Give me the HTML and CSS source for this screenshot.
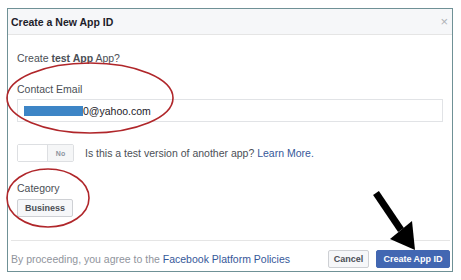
FILE: index.html
```html
<!DOCTYPE html>
<html>
<head>
<meta charset="utf-8">
<link rel="stylesheet" href="styles.css">
</head>
<body>
<div class="dialog">
  <div class="header">
    <span class="title">Create a New App ID</span>
    <span class="close">&#215;</span>
  </div>
  <div class="content">
    <div class="intro">Create <b>test App</b> App?</div>
    <div class="label">Contact Email</div>
    <div class="input"><span class="redact"></span>0@yahoo.com</div>
    <div class="toggle-row">
      <div class="toggle"><span class="knob"></span><span class="no">No</span></div>
      <span class="question">Is this a test version of another app? <a class="link">Learn More.</a></span>
    </div>
    <div class="label cat">Category</div>
    <div class="btn-cat">Business</div>
  </div>
  <div class="footer">
    <span class="agree">By proceeding, you agree to the <a class="link">Facebook Platform Policies</a></span>
    <div class="actions">
      <button class="btn cancel">Cancel</button>
      <button class="btn primary">Create App ID</button>
    </div>
  </div>
</div>
<svg class="marks" width="461" height="280" viewBox="0 0 461 280">
  <ellipse cx="90" cy="98" rx="83" ry="35" fill="none" stroke="#b0262a" stroke-width="1.6"/>
  <ellipse cx="48" cy="198" rx="41" ry="29" fill="none" stroke="#b0262a" stroke-width="1.6"/>
  <polygon points="378.9,191 373.1,195 398.1,232 403.9,228" fill="#000"/>
  <polygon points="390,239 412,221 415,250" fill="#000"/>
</svg>
</body>
</html>
```
FILE: styles.css
```css
html, body {
  margin: 0;
  padding: 0;
  background: #fff;
}
body {
  width: 461px;
  height: 280px;
  position: relative;
  font-family: "Liberation Sans", Arial, sans-serif;
  overflow: hidden;
}
.dialog {
  position: relative;
  margin: 8px 0 0 7px;
  width: 446px;
  height: 264px;
  box-sizing: border-box;
  border: 1px solid #6f9196;
  display: flex;
  flex-direction: column;
  background: #fff;
}
.header {
  height: 25px;
  background: #f6f7f9;
  border-bottom: 1px solid #e5e5e5;
  display: flex;
  align-items: center;
  justify-content: space-between;
  padding: 0 4px 0 3px;
}
.title {
  font-size: 10.5px;
  font-weight: bold;
  color: #1d2129;
}
.close {
  font-size: 13px;
  color: #b0b3b8;
  line-height: 1;
}
.content {
  flex: 1;
  padding: 16px 9px 0 9px;
  color: #4b4f56;
  font-size: 10.5px;
}
.intro {
  line-height: 14px;
}
.intro b {
  color: #4b4f56;
}
.label {
  line-height: 14px;
  margin-top: 17px;
}
.input {
  margin-top: 3px;
  height: 23px;
  box-sizing: border-box;
  border: 1px solid #e1e3e6;
  display: flex;
  align-items: center;
  padding-left: 6px;
  font-size: 10.5px;
  color: #1d2129;
}
.redact {
  display: inline-block;
  width: 59px;
  height: 10px;
  background: #3d85c6;
}
.toggle-row {
  margin-top: 22px;
  display: flex;
  align-items: center;
  gap: 11px;
}
.toggle {
  width: 57px;
  height: 18px;
  box-sizing: border-box;
  border: 1px solid #dddfe2;
  border-radius: 2px;
  display: flex;
}
.knob {
  width: 29px;
  background: #fff;
  border-right: 1px solid #dddfe2;
}
.no {
  flex: 1;
  background: #f5f6f7;
  font-size: 7px;
  font-weight: bold;
  color: #8d949e;
  display: flex;
  align-items: center;
  justify-content: center;
}
.question {
  font-size: 10.5px;
  color: #4b4f56;
}
.link {
  color: #365899;
  text-decoration: none;
}
.cat {
  margin-top: 19px;
}
.btn-cat {
  margin-top: 4px;
  width: 56px;
  height: 18px;
  box-sizing: border-box;
  border: 1px solid #ced0d4;
  border-radius: 2px;
  background: #f6f7f9;
  font-size: 9px;
  font-weight: bold;
  color: #4b4f56;
  display: flex;
  align-items: center;
  justify-content: center;
}
.footer {
  margin: 0 2px 0 3px;
  height: 31px;
  box-sizing: border-box;
  border-top: 1px solid #e5e5e5;
  display: flex;
  align-items: center;
  justify-content: space-between;
  padding-top: 6px;
}
.agree {
  font-size: 10.5px;
  color: #90949c;
}
.actions {
  display: flex;
  gap: 7px;
}
.btn {
  height: 18px;
  box-sizing: border-box;
  border-radius: 2px;
  font-family: "Liberation Sans", Arial, sans-serif;
  font-size: 9px;
  font-weight: bold;
  padding: 0;
  display: flex;
  align-items: center;
  justify-content: center;
}
.cancel {
  width: 41px;
  background: #f6f7f9;
  border: 1px solid #ced0d4;
  color: #4b4f56;
}
.primary {
  width: 74px;
  background: #4267b2;
  border: 1px solid #4267b2;
  color: #fff;
}
.marks {
  position: absolute;
  left: 0;
  top: 0;
  pointer-events: none;
}
```
